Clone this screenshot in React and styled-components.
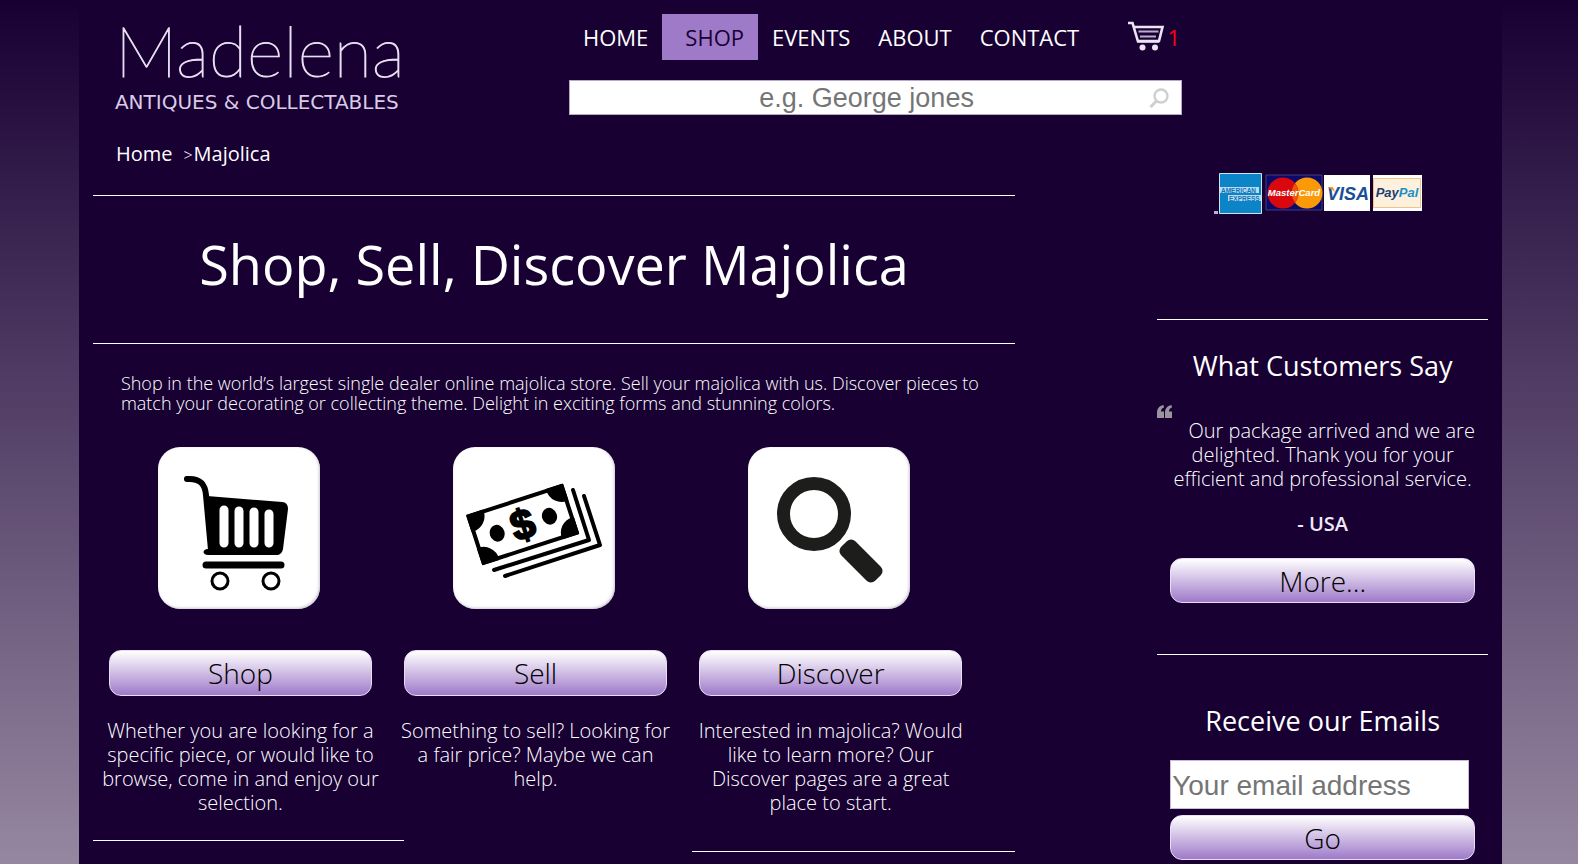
import React from 'react';
import styled, { createGlobalStyle } from 'styled-components';


const GlobalStyle = createGlobalStyle`
    * {
        box-sizing: border-box;
    }
    html {
        background: #180033;
    }
    body {
        margin: 0;
        min-height: 100vh;
        background: linear-gradient(#180033, #9687a1);
        font-family: 'Open Sans', sans-serif;
        font-size: 20px;
        line-height: 24px;
        color: white;
    }
    a {
        color: inherit;
        text-decoration: none;
    }
    h1, h2, p, blockquote {
        margin: 0;
    }
    h1, h2 {
        font-weight: 400;
    }
`;

const Page = styled.div`
    width: 90.2%;
    margin-left: 5%;
    min-height: 100vh;
    padding: 0 14px;
    background: #180033;
`;

const Header = styled.header`
    display: grid;
    grid-template-columns: 476fr 613fr 306fr;
    padding-top: 14px;
    height: 126px;
`;

const Logo = styled.a`
    display: flex;
    flex-direction: column;
    align-items: flex-start;
    padding-left: 22px;
    white-space: nowrap;
`;

const LogoName = styled.span`
    font-family: 'Lato', sans-serif;
    font-weight: 100;
    font-size: 70px;
    line-height: 72px;
    color: #e9dff2;
    -webkit-text-stroke: 1px #e9dff2;
`;

const LogoTag = styled.span`
    font-family: 'DejaVu Sans', sans-serif;
    font-size: 20px;
    line-height: 32px;
    color: #d9cce6;
`;

const Nav = styled.nav`
    display: flex;
    align-items: center;
    height: 46px;
    margin-bottom: 20px;
`;

const NavLink = styled.a`
    padding: 0 14px 0 ${props => props.$active ? 23 : 14}px;
    font-size: 22px;
    line-height: 46px;
    color: ${props => props.$active ? '#180033' : 'white'};
    background: ${props => props.$active ? '#9f7ac9' : 'transparent'};
`;

const CartLink = styled.a`
    display: flex;
    align-items: center;
    gap: 3px;
    margin-left: auto;
    padding-right: 2px;
    font-size: 22px;
    color: #ff0018;
`;

const SearchBox = styled.form`
    display: flex;
    align-items: center;
    height: 35px;
    padding-right: 12px;
    background: white;
    border: 1px solid #b9a9c9;
    & input {
        flex: 1;
        min-width: 0;
        height: 100%;
        padding: 2px 0 0 14px;
        border: none;
        outline: none;
        background: transparent;
        text-align: center;
        font-family: 'Liberation Sans', sans-serif;
        font-size: 27px;
    }
    & button {
        display: flex;
        padding: 0;
        border: none;
        background: none;
    }
`;

const Columns = styled.div`
    display: grid;
    grid-template-columns: 922fr 331fr;
    column-gap: 142px;
`;

const Breadcrumb = styled.nav`
    display: flex;
    align-items: baseline;
    height: 69px;
    padding: 16px 0 0 23px;
    & span {
        margin: 0 1px 0 11px;
        font-size: 16px;
        font-weight: 300;
    }
`;

const Rule = styled.hr`
    width: 100%;
    height: 1px;
    margin: 0;
    border: none;
    background: white;
`;

const Title = styled.h1`
    font-size: 54px;
    line-height: 76px;
    padding: 30px 0 41px;
    text-align: center;
`;

const Intro = styled.p`
    padding: 29px 20px 34px 28px;
    font-size: 18px;
    line-height: 20px;
    font-weight: 300;
`;

const Cards = styled.section`
    display: grid;
    grid-template-columns: repeat(3, 32%);
`;

const Card = styled.article`
    display: flex;
    flex-direction: column;
    align-items: center;
    text-align: center;
    font-weight: 300;
    & p {
        padding: 23px 6px 0;
    }
`;

const Tile = styled.a`
    width: 162px;
    height: 162px;
    margin: 0 3px 41px 0;
    border-radius: 22px;
    background: white;
    box-shadow: inset -1px -1px 3px #c9c4d0;
`;

const PurpleButton = styled.button`
    width: ${props => props.$width};
    height: ${props => props.$height}px;
    padding: 0;
    border: 1px solid #e9dff5;
    border-radius: 12px;
    background: linear-gradient(white, #9f7ac9);
    font-family: inherit;
    font-size: 28px;
    font-weight: 300;
    line-height: 40px;
    color: black;
    cursor: pointer;
`;

const BottomRules = styled.div`
    display: flex;
    justify-content: space-between;
    padding-top: 25px;
`;

const BottomRule = styled(Rule)`
    width: ${props => props.$width};
    margin-top: ${props => props.$top || 0}px;
`;

const Sidebar = styled.aside`
    display: flex;
    flex-direction: column;
    align-items: center;
    padding-top: 46px;
`;

const Payments = styled.div`
    height: 147px;
    padding-right: 8px;
`;

const SideTitle = styled.h2`
    padding-top: ${props => props.$top}px;
    font-size: 27px;
    line-height: 36px;
    text-align: center;
`;

const Quote = styled.blockquote`
    width: 100%;
    padding-top: 21px;
    font-weight: 300;
    text-align: center;
    & svg {
        display: block;
    }
    & p {
        padding: 0 10px;
        text-indent: 18px;
    }
    & cite {
        display: block;
        padding: 21px 0 22px;
        font-style: normal;
        font-weight: 600;
        color: #f0e8f8;
    }
`;

const EmailForm = styled.form`
    display: flex;
    flex-direction: column;
    width: 305px;
    padding: 21px 0 3px;
    gap: 6px;
    & input {
        width: 299px;
        height: 49px;
        padding: 2px 1px 0;
        border: 1px solid #c9bdd6;
        border-radius: 0;
        outline: none;
        background: white;
        font-family: 'Liberation Sans', sans-serif;
        font-size: 28px;
    }
    & input::placeholder {
        color: #757575;
    }
`;

const CartIcon = () => (
    <svg width="38" height="32" viewBox="0 0 38 32" fill="none" stroke="#ece4f4">
        <path d="M1 2h4.500L11 20.500h21" strokeWidth="2.600" />
        <path d="M7 6h28.500l-3.500 14H10.500" strokeWidth="2.600" />
        <path d="M11.500 10.500h20M13 15.500h16" strokeWidth="2" stroke="#b9adc9" />
        <circle cx="15.500" cy="26.500" r="3" fill="#ece4f4" stroke="none" />
        <circle cx="28" cy="26.500" r="3" fill="#ece4f4" stroke="none" />
    </svg>
);

const SearchIcon = () => (
    <svg width="20" height="20" viewBox="0 0 20 20" fill="none" stroke="#cfcfcf">
        <circle cx="12" cy="8" r="6.500" strokeWidth="2.400" />
        <path d="M7.500 13l-6 6" strokeWidth="3" />
    </svg>
);

const QuoteIcon = () => (
    <svg width="16" height="14" viewBox="0 0 16 14" fill="#99949f">
        <path d="M6.500 0C2 1 0 3.500 0 8v5h7V6.500H4C4 4.500 5 3.200 7 2.600z" />
        <path d="M14.500 0C10 1 8 3.500 8 8v5h7V6.500h-3c0-2 1-3.300 3-3.900z" />
    </svg>
);

const ShopIcon = () => (
    <svg width="162" height="162" viewBox="0 0 162 162">
        <path d="M29 32c12-1 18 4 19 16l5 55" fill="none" stroke="black" strokeWidth="6" strokeLinecap="round" />
        <path d="M49 49l75 6c4 0 6 3 6 7l-5 40c-1 4-3 6-7 6H50c-6 0-6-6 0-6h2z" fill="black" />
        <path d="M66 63v33M81 64v32M96 65v31M111 67v29" stroke="white" strokeWidth="9" strokeLinecap="round" />
        <path d="M48 118h75" stroke="black" strokeWidth="7" strokeLinecap="round" />
        <circle cx="62" cy="134" r="8" fill="none" stroke="black" strokeWidth="3" />
        <circle cx="113" cy="134" r="8" fill="none" stroke="black" strokeWidth="3" />
    </svg>
);

const SellIcon = () => (
    <svg width="162" height="162" viewBox="0 0 162 162">
        <path d="M120 43l16 50-95 30M131 49l16 49-95 31" fill="none" stroke="black" strokeWidth="4" strokeLinecap="round" strokeLinejoin="round" />
        <g transform="translate(13 68) rotate(-18)">
            <clipPath id="note">
                <rect width="102" height="53" rx="1" />
            </clipPath>
            <g clipPath="url(#note)">
                <rect width="102" height="53" fill="white" stroke="black" strokeWidth="8" />
                <circle cx="2" cy="2" r="16" />
                <circle cx="100" cy="2" r="16" />
                <circle cx="2" cy="51" r="16" />
                <circle cx="100" cy="51" r="16" />
            </g>
            <ellipse cx="24" cy="27" rx="7.500" ry="8.500" />
            <ellipse cx="79" cy="27" rx="7.500" ry="8.500" />
            <text x="51" y="41" fontFamily="'Liberation Sans', sans-serif" fontWeight="700" fontSize="42" stroke="black" strokeWidth="2" textAnchor="middle">$</text>
        </g>
    </svg>
);

const DiscoverIcon = () => (
    <svg width="162" height="162" viewBox="0 0 162 162">
        <circle cx="66" cy="67" r="30.500" fill="none" stroke="#1d1d1b" strokeWidth="13" />
        <rect x="-24" y="-10" width="48" height="20" rx="6" transform="translate(113 114) rotate(45)" fill="#1d1d1b" />
    </svg>
);

const PaymentLogos = () => (
    <svg width="210" height="43" viewBox="0 0 210 43" fontFamily="'Liberation Sans', sans-serif" fontStyle="italic" fontWeight="700">
        <path d="M0 39h4v3H0z" fill="#b9b3d6" />
        <path d="M5.500 1.500h42v40h-42z" fill="#0c84c8" stroke="#cfe4f3" />
        <path d="M6 15h39v6H6zM14 23h33v6H14z" fill="#b8dcef" />
        <text x="7" y="20.500" fontSize="6.500" fontStyle="normal" fill="#0c74b8">AMERICAN</text>
        <text x="15" y="28.500" fontSize="6.500" fontStyle="normal" fill="#0c74b8">EXPRESS</text>
        <path d="M52 3h56v35H52z" fill="#0b0a6b" stroke="#6a6296" strokeWidth=".6" />
        <circle cx="93" cy="21" r="15.500" fill="#fb9a09" />
        <circle cx="69" cy="21" r="15.500" fill="#d9080f" />
        <path d="M81 11.500a15.500 15.500 0 0 1 0 19 15.500 15.500 0 0 1 0-19z" fill="#e8590c" />
        <text x="80" y="24" fontSize="9.500" fill="white" textAnchor="middle">MasterCard</text>
        <path d="M110 3h46v36h-46z" fill="white" />
        <text x="134" y="28" fontSize="18" fill="#1a4f96" textAnchor="middle">VISA</text>
        <path d="M114 15h5l2 5z" fill="#f09a2a" />
        <path d="M159 3h49v36h-49z" fill="white" />
        <path d="M159.500 6.500h47v29h-47z" fill="#fdf1dd" stroke="#eec48a" />
        <text x="183" y="25" fontSize="13" fill="#1b3f74" textAnchor="middle">Pay<tspan fill="#1c8fca">Pal</tspan></text>
    </svg>
);

const navItems = ['HOME', 'SHOP', 'EVENTS', 'ABOUT', 'CONTACT'];

const cards = [
    {
        name: 'Shop',
        Icon: ShopIcon,
        text: 'Whether you are looking for a specific piece, or would like to browse, come in and enjoy our selection.',
    },
    {
        name: 'Sell',
        Icon: SellIcon,
        text: 'Something to sell? Looking for a fair price? Maybe we can help.',
    },
    {
        name: 'Discover',
        Icon: DiscoverIcon,
        text: 'Interested in majolica? Would like to learn more? Our Discover pages are a great place to start.',
    },
];

const SiteHeader = () => {
    return (
        <Header>
            <Logo href="#home">
                <LogoName>Madelena</LogoName>
                <LogoTag>ANTIQUES &amp; COLLECTABLES</LogoTag>
            </Logo>
            <div>
                <Nav>
                    {navItems.map(item => (
                        <NavLink key={item} href={`#${item.toLowerCase()}`} $active={item === 'SHOP'}>{item}</NavLink>
                    ))}
                    <CartLink href="#cart" aria-label="Cart, 1 item">
                        <CartIcon />
                        1
                    </CartLink>
                </Nav>
                <SearchBox onSubmit={e => e.preventDefault()}>
                    <input type="text" aria-label="Search" placeholder="e.g. George jones" />
                    <button type="submit" aria-label="Search"><SearchIcon /></button>
                </SearchBox>
            </div>
        </Header>
    );
}

const SideColumn = () => {
    return (
        <Sidebar>
            <Payments>
                <PaymentLogos />
            </Payments>
            <Rule />
            <SideTitle $top={28}>What Customers Say</SideTitle>
            <Quote>
                <QuoteIcon />
                <p>Our package arrived and we are delighted. Thank you for your efficient and professional service.</p>
                <cite>- USA</cite>
            </Quote>
            <PurpleButton type="button" $width="305px" $height={45}>More...</PurpleButton>
            <BottomRule $width="100%" $top={51} />
            <SideTitle $top={48}>Receive our Emails</SideTitle>
            <EmailForm onSubmit={e => e.preventDefault()}>
                <input type="email" aria-label="Your email address" placeholder="Your email address" />
                <PurpleButton type="submit" $width="100%" $height={45}>Go</PurpleButton>
            </EmailForm>
        </Sidebar>
    );
}

const App = () => {
    return (
        <Page>
            <GlobalStyle />
            <SiteHeader />
            <Columns>
                <main>
                    <Breadcrumb>
                        <a href="#home">Home</a>
                        <span>&gt;</span>
                        <a href="#majolica">Majolica</a>
                    </Breadcrumb>
                    <Rule />
                    <Title>Shop, Sell, Discover Majolica</Title>
                    <Rule />
                    <Intro>
                        Shop in the world’s largest single dealer online majolica store. Sell your majolica with us. Discover pieces to match your decorating or collecting theme. Delight in exciting forms and stunning colors.
                    </Intro>
                    <Cards>
                        {cards.map(({ name, Icon, text }) => (
                            <Card key={name}>
                                <Tile href={`#${name.toLowerCase()}`} aria-label={name}><Icon /></Tile>
                                <PurpleButton type="button" $width="263px" $height={46}>{name}</PurpleButton>
                                <p>{text}</p>
                            </Card>
                        ))}
                    </Cards>
                    <BottomRules>
                        <BottomRule $width="311px" />
                        <BottomRule $width="323px" $top={11} />
                    </BottomRules>
                </main>
                <SideColumn />
            </Columns>
        </Page>
    );
}

export default App;
